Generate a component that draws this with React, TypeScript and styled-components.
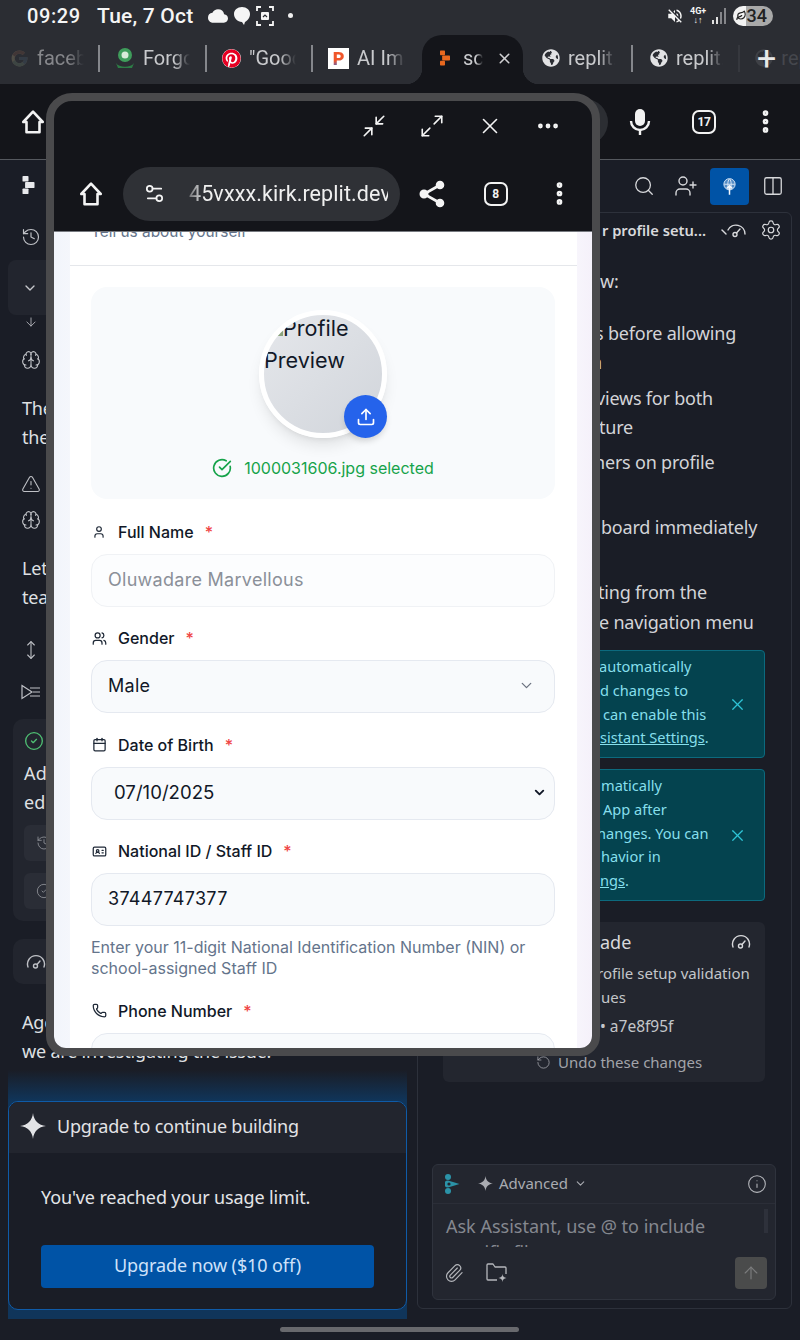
import styled, { createGlobalStyle } from "styled-components"
import {
  ArrowDown,
  ArrowUp,
  Brain,
  Calendar,
  ChevronDown,
  CircleCheck,
  CircleCheckBig,
  Columns2,
  Ellipsis,
  EllipsisVertical,
  History,
  IdCard,
  Info,
  Leaf,
  Maximize2,
  Minimize2,
  MoveVertical,
  Paperclip,
  Phone,
  RotateCcw,
  Search,
  Settings,
  Settings2,
  TriangleAlert,
  Upload,
  User,
  UserPlus,
  Users,
  X,
} from "lucide-react"
import { FaGlobeAmericas, FaPinterest } from "react-icons/fa"
import { FcGoogle } from "react-icons/fc"
import { MdCloud, MdVolumeOff } from "react-icons/md"

const UI_FONT = `"Noto Sans", "Liberation Sans", sans-serif`
const FORM_FONT = `Inter, "Liberation Sans", sans-serif`
const PHONE_FONT = `Roboto, "Liberation Sans", sans-serif`

const GlobalStyle = createGlobalStyle`
  html, body {
    margin: 0;
    padding: 0;
    background: #1a1d26;
  }
  * {
    box-sizing: border-box;
  }
`

const Screen = styled.div`
  position: relative;
  width: 800px;
  height: 1340px;
  overflow: hidden;
  background: #1a1d26;
  color: #e4e5e8;
  font-family: ${UI_FONT};
`

/* phone chrome */

const TopChrome = styled.div`
  background: #2b2d33;
  height: 84px;
`

const StatusBar = styled.div`
  height: 35px;
  display: flex;
  align-items: center;
  padding: 0 27px 4px;
  font-family: ${PHONE_FONT};
  color: #f5f5f5;
`

const Clock = styled.span`
  font-size: 20px;
  font-weight: 500;
  letter-spacing: 0.6px;
  width: 70px;
`

const DateText = styled.span`
  font-size: 21px;
  font-weight: 500;
  width: 111px;
  letter-spacing: 0.2px;
  white-space: nowrap;
`

const StatusIcons = styled.div`
  display: flex;
  align-items: center;
  gap: 5px;
`

const Dot = styled.span`
  width: 5px;
  height: 5px;
  margin-left: 9px;
  border-radius: 50%;
  background: #f0f0f0;
`

const StatusRight = styled.div`
  margin-left: auto;
  display: flex;
  align-items: center;
`

const NetworkLabel = styled.span`
  font-size: 9px;
  line-height: 9px;
  font-weight: 700;
  text-align: center;
  width: 16px;
  margin: 0 6px 0 6px;
`

const Battery = styled.span`
  margin: 0 0 0 7px;
  width: 40px;
  height: 20px;
  border-radius: 10px;
  background: linear-gradient(90deg, #f2f2f2 0 32%, #a9a9a9 32% 100%);
  color: #222;
  font-size: 18px;
  font-weight: 500;
  display: flex;
  align-items: center;
  justify-content: space-between;
  padding: 0 6px 0 3px;
`

const TabStrip = styled.div`
  height: 49px;
  display: flex;
  align-items: center;
  font-family: ${PHONE_FONT};
`

const Tab = styled.div<{ $width: number; $pad: number }>`
  width: ${({ $width }) => $width}px;
  padding: 0 0 3px ${({ $pad }) => $pad}px;
  height: 100%;
  flex: none;
  display: flex;
  align-items: center;
  gap: 8px;
`

const ActiveTab = styled.div`
  position: relative;
  width: 101px;
  height: 100%;
  flex: none;
  display: flex;
  align-items: center;
  padding: 0 0 3px 18px;
  gap: 13px;
  background: #14151a;
  border-radius: 20px 20px 0 0;

  &::before,
  &::after {
    content: "";
    position: absolute;
    bottom: 0;
    width: 16px;
    height: 16px;
  }
  &::before {
    left: -16px;
    background: radial-gradient(circle at 0 0, transparent 16px, #14151a 16.5px);
  }
  &::after {
    right: -16px;
    background: radial-gradient(circle at 100% 0, transparent 16px, #14151a 16.5px);
  }
`

const TabTitle = styled.span<{ $width: number; $dim?: boolean }>`
  width: ${({ $width }) => $width}px;
  overflow: hidden;
  white-space: nowrap;
  font-size: 20px;
  color: ${({ $dim }) => ($dim ? "#86878b" : "#c9cacd")};
  -webkit-mask-image: linear-gradient(90deg, #000 65%, transparent 100%);
  mask-image: linear-gradient(90deg, #000 65%, transparent 100%);
`

const TabSeparator = styled.span<{ $faint?: boolean }>`
  flex: none;
  width: 2px;
  height: 27px;
  margin-bottom: 3px;
  background: ${({ $faint }) => ($faint ? "#36383e" : "#85878c")};
`

const FadedIcon = styled.span`
  flex: none;
  display: flex;
  opacity: 0.22;
  filter: grayscale(0.7);
`

const PaperIcon = styled.span`
  flex: none;
  width: 21px;
  height: 21px;
  background: #fff;
  display: flex;
  align-items: center;
  justify-content: center;
`

const PaperLetter = styled.span`
  font: 900 18px ${PHONE_FONT};
  background: linear-gradient(165deg, #f0562a 55%, #3b62d4 85%);
  -webkit-background-clip: text;
  background-clip: text;
  color: transparent;
`

const PlusTab = styled.span`
  position: relative;
  margin: 0 0 3px 17px;
  width: 22px;
  text-align: center;
  font-size: 34px;
  font-weight: 400;
  line-height: 46px;
  color: #e8e8e8;
`

const PlusGhost = styled.span`
  position: absolute;
  left: -2px;
  top: 14px;
  display: flex;
  opacity: 0.1;
`

const GhostTitle = styled.span`
  margin: 0 0 3px 5px;
  font-size: 20px;
  color: #45474d;
  white-space: nowrap;
`

const AddressBar = styled.div`
  height: 76px;
  background: #14151a;
  display: flex;
  align-items: center;
  padding-left: 20px;
  border-bottom: 1px solid #55585e;
  color: #f2f2f2;
`

const AddressPill = styled.div`
  margin-left: 262px;
  width: 300px;
  height: 46px;
  border-radius: 23px;
  background: #2c2e33;
`

const AddressActions = styled.div`
  margin-left: 21px;
  display: flex;
  align-items: center;
  gap: 38px;
`

const MicSlot = styled.span`
  display: flex;
  margin-right: 3px;
`

const MenuDots = styled(EllipsisVertical)`
  margin-left: -3px;
`

const CountBadge = styled.span<{ $size: number }>`
  width: ${({ $size }) => $size}px;
  height: ${({ $size }) => $size}px;
  border: 2.5px solid #f2f2f2;
  border-radius: 7px;
  display: flex;
  align-items: center;
  justify-content: center;
  font: 700 12px ${PHONE_FONT};
  letter-spacing: -0.5px;
  color: #f2f2f2;
`

const Workspace = styled.div`
  display: flex;
`

/* left column */

const LeftPanel = styled.div`
  width: 416px;
  flex: none;
  display: flex;
  flex-direction: column;
  height: 1179px;
`

const IconRow = styled.div<{ $top: number; $height?: number; $left?: number }>`
  margin-top: ${({ $top }) => $top}px;
  height: ${({ $height }) => $height ?? 20}px;
  padding-left: ${({ $left }) => $left ?? 21}px;
  display: flex;
  align-items: center;
  color: #bfc1c6;
`

const CollapsedRow = styled.div`
  margin: 11px 16px 0 8px;
  height: 55px;
  padding-left: 14px;
  border-radius: 8px;
  background: #22252e;
  display: flex;
  align-items: center;
  color: #c6c8cc;
`

const Message = styled.div<{ $top: number }>`
  margin-top: ${({ $top }) => $top}px;
  padding-left: 22px;
  font-size: 18px;
  line-height: 29px;
  color: #dfe0e3;
  letter-spacing: -0.2px;
  white-space: nowrap;
`

const ResultCard = styled.div`
  margin: 17px 11px 0 13px;
  height: 202px;
  padding: 12px 11px;
  border-radius: 10px;
  background: #22252e;
`

const ResultText = styled.div`
  margin-top: 3px;
  font-size: 18px;
  line-height: 29px;
  color: #dfe0e3;
  letter-spacing: 0.2px;
`

const ResultRow = styled.div<{ $top: number }>`
  margin-top: ${({ $top }) => $top}px;
  height: 36px;
  padding-left: 12px;
  border-radius: 6px;
  background: #2a2d36;
  display: flex;
  align-items: center;
  color: #8f9197;
`

const GaugeCard = styled.div`
  margin: 18px 11px 0 13px;
  height: 45px;
  padding-left: 13px;
  border-radius: 10px;
  background: #22252e;
  display: flex;
  align-items: center;
  color: #bfc1c6;
`

const UpgradeGlow = styled.div`
  margin: -6px 9px 0 8px;
  padding: 41px 0 9px;
  background: linear-gradient(
    180deg,
    rgba(16, 64, 112, 0) 0,
    rgba(16, 64, 112, 0) 10px,
    #10355a 41px,
    #10355a 100%
  );
`

const UpgradeCard = styled.div`
  height: 209px;
  border: 1px solid #0f5ba8;
  border-radius: 10px;
  background: #1a1d26;
  overflow: hidden;
`

const UpgradeHeader = styled.div`
  height: 51px;
  display: flex;
  align-items: center;
  gap: 11px;
  padding: 0 0 3px 11px;
  background: #22252e;
  font-size: 18px;
  letter-spacing: -0.25px;
  color: #e2e3e6;
`

const UpgradeBody = styled.div`
  padding: 31px 32px 0;
`

const UpgradeNote = styled.div`
  font-size: 18px;
  line-height: 26px;
  letter-spacing: -0.13px;
  color: #e4e5e8;
`

const UpgradeButton = styled.div`
  margin-top: 35px;
  height: 43px;
  padding-bottom: 3px;
  border-radius: 4px;
  background: #0053a6;
  display: flex;
  align-items: center;
  justify-content: center;
  font-size: 18px;
  letter-spacing: -0.1px;
  color: #cfe2fa;
`

/* right column */

const RightPanel = styled.div`
  flex: 1;
  min-width: 0;
  padding: 0 8px 0 1px;
`

const PanelToolbar = styled.div`
  height: 52px;
  display: flex;
  align-items: center;
  justify-content: flex-end;
  padding-right: 8px;
  gap: 13px;
  color: #d8d9dc;
`

const SearchIcon = styled(Search)`
  margin-right: 6px;
`

const ActiveToolButton = styled.span`
  width: 39px;
  height: 37px;
  margin-left: -1px;
  border-radius: 4px;
  background: #0053a6;
  display: flex;
  align-items: center;
  justify-content: center;
  color: #d9e6f6;
`

const AssistantCard = styled.div`
  height: 1097px;
  border: 1px solid #2d313b;
  border-radius: 6px;
`

const ThreadTitle = styled.div`
  height: 34px;
  display: flex;
  align-items: center;
  justify-content: flex-end;
  padding-right: 9px;
  color: #d8d9dc;
`

const ThreadName = styled.span`
  margin-right: 15px;
  font-size: 14.7px;
  font-weight: 600;
  white-space: nowrap;
`

const ThreadGauge = styled.span`
  margin-right: 13px;
  display: flex;
`

const BodyLine = styled.div<{ $x: number; $top?: number }>`
  margin-top: ${({ $top }) => $top ?? 0}px;
  padding-left: ${({ $x }) => $x}px;
  height: 29px;
  font-size: 18px;
  line-height: 29px;
  letter-spacing: -0.2px;
  white-space: nowrap;
  color: #d3d4d8;
`

const TealAlert = styled.div<{ $top: number; $height: number }>`
  margin: ${({ $top }) => $top}px 26px 0 25px;
  height: ${({ $height }) => $height}px;
  padding: 0 17px 0 151px;
  border: 1px solid #0c6a7e;
  border-radius: 4px;
  background: #04434f;
  display: flex;
  align-items: center;
  justify-content: space-between;
`

const TealText = styled.div`
  margin-top: -3px;
  font-size: 14.6px;
  white-space: nowrap;
  color: #86dfec;
`

const TealLine = styled.div<{ $x: number }>`
  height: 23.8px;
  line-height: 23.8px;
  padding-left: ${({ $x }) => $x}px;
`

const TealLink = styled.span`
  text-decoration: underline;
`

const CheckpointCard = styled.div`
  margin: 21px 26px 0 25px;
  height: 160px;
  border-radius: 6px;
  background: #23262f;
  padding: 7px 14px 0 157px;
  color: #c4c6ca;
`

const CheckpointHead = styled.div`
  display: flex;
  justify-content: space-between;
  align-items: center;
  font-size: 18px;
  line-height: 26px;
  color: #d8d9dc;
`

const CheckpointText = styled.div`
  margin: 6px 0 0 -3px;
  font-size: 15px;
  line-height: 24px;
  white-space: nowrap;
`

const CommitHash = styled.div`
  margin-top: 5px;
  font-size: 15.5px;
  line-height: 24px;
`

const UndoLine = styled.div`
  margin: 12px 0 0 -64px;
  display: flex;
  align-items: center;
  gap: 7px;
  font-size: 15px;
  line-height: 24px;
  color: #a2a4aa;
  white-space: nowrap;
`

const Composer = styled.div`
  margin: 82px 15px 0 14px;
  height: 136px;
  border: 1px solid #2f333d;
  border-radius: 6px;
  background: #23262f;
  display: flex;
  flex-direction: column;
  color: #b5b7bc;
`

const ComposerHead = styled.div`
  height: 39px;
  flex: none;
  display: flex;
  align-items: center;
  padding: 0 8px 0 12px;
  border-bottom: 1px solid #2b2e38;
`

const ModeLabel = styled.span`
  margin-left: 18px;
  display: flex;
  align-items: center;
  gap: 6px;
  font-size: 15px;
  line-height: 18px;
  padding-bottom: 2px;
  color: #a9abb1;
`

const ComposerInfo = styled.span`
  margin-left: auto;
  display: flex;
`

const ComposerInput = styled.div`
  position: relative;
  height: 42px;
  flex: none;
  margin-top: 1px;
  padding: 8px 0 0 13px;
  overflow: hidden;
  font-size: 18px;
  line-height: 26px;
  color: #85888f;
`

const InputScrollbar = styled.span`
  position: absolute;
  top: 4px;
  right: 7px;
  width: 4px;
  height: 24px;
  background: #2e313b;
`

const ComposerFoot = styled.div`
  flex: 1;
  display: flex;
  align-items: center;
  gap: 22px;
  padding: 0 8px 0 11px;
  color: #b5b7bc;
`

const SendButton = styled.span`
  margin-left: auto;
  width: 32px;
  height: 32px;
  border-radius: 4px;
  background: #4a4b4b;
  display: flex;
  align-items: center;
  justify-content: center;
  color: #7b7c7d;
`

const HomeIndicator = styled.div`
  position: absolute;
  left: 280px;
  bottom: 8px;
  width: 239px;
  height: 5px;
  border-radius: 3px;
  background: #68696d;
`

/* floating preview window */

const PopupWindow = styled.div`
  position: absolute;
  left: 46px;
  top: 93px;
  width: 554px;
  height: 963px;
  border: 8px solid #4a4a4c;
  border-radius: 26px 26px 20px 20px;
  background: #14151a;
  overflow: hidden;
  display: flex;
  flex-direction: column;
  color: #f4f4f4;
`

const WindowControls = styled.div`
  height: 50px;
  flex: none;
  padding-right: 31px;
  display: flex;
  align-items: center;
  justify-content: flex-end;
  gap: 32px;
  font-family: ${PHONE_FONT};
`

const BrowserBar = styled.div`
  height: 81px;
  flex: none;
  display: flex;
  align-items: center;
  padding: 5px 0 0 24px;
  border-bottom: 1px solid #777a80;
`

const UrlPill = styled.div`
  margin-left: 19px;
  width: 277px;
  height: 54px;
  border-radius: 27px;
  background: #2f3136;
  display: flex;
  align-items: center;
  padding-left: 20px;
  gap: 23px;
  flex: none;
`

const UrlText = styled.span`
  width: 199px;
  overflow: hidden;
  white-space: nowrap;
  font: 400 21.5px ${PHONE_FONT};
  letter-spacing: 0.1px;
  color: #f0f0f0;
  -webkit-mask-image: linear-gradient(90deg, #0005 0, #000 16px);
  mask-image: linear-gradient(90deg, #0005 0, #000 16px);
`

const BrowserActions = styled.div`
  margin-left: 17px;
  display: flex;
  align-items: center;
`

const BrowserAction = styled.span<{ $width: number }>`
  width: ${({ $width }) => $width}px;
  display: flex;
  justify-content: center;
`

const Page = styled.div`
  flex: 1;
  min-height: 0;
  overflow: hidden;
  padding: 0 15px 0 16px;
  background: linear-gradient(90deg, #f2f5fb, #f7f8fc 5%, #f9f8fd 95%, #f5f1fa);
  font-family: ${FORM_FONT};
`

const FormCard = styled.div`
  background: #fff;
`

const CardHeader = styled.div`
  height: 34px;
  overflow: hidden;
  border-bottom: 1px solid #e5e7eb;
  padding-left: 21px;
`

const CardSubtitle = styled.div`
  margin-top: -10px;
  font-size: 15.4px;
  line-height: 20px;
  color: #64748b;
`

const CardBody = styled.div`
  padding: 21px 22px 0 21px;
`

const UploadBox = styled.div`
  height: 212px;
  border-radius: 16px;
  background: #f8fafc;
  display: flex;
  flex-direction: column;
  align-items: center;
  padding-top: 23px;
`

const AvatarWrap = styled.div`
  position: relative;
  width: 128px;
  height: 128px;
`

const Avatar = styled.div`
  width: 128px;
  height: 128px;
  border: 5px solid #fff;
  border-radius: 50%;
  overflow: hidden;
  background: linear-gradient(135deg, #e5e7eb, #d1d5db);
  box-shadow: 0 10px 15px -3px rgba(0, 0, 0, 0.1), 0 4px 6px -4px rgba(0, 0, 0, 0.1);
`

const AvatarAlt = styled.div`
  margin-top: -3px;
  font-size: 21.6px;
  line-height: 32px;
  color: #111827;
`

const BrokenImage = styled.span`
  display: inline-block;
  width: 8px;
  height: 8px;
  margin-left: 11px;
  background: linear-gradient(135deg, #eef2ee 40%, #8aa37c 60%);
`

const UploadButton = styled.span`
  position: absolute;
  right: 0;
  bottom: 0;
  width: 43px;
  height: 43px;
  border-radius: 50%;
  background: #2563eb;
  box-shadow: 0 4px 6px -1px rgba(0, 0, 0, 0.15);
  display: flex;
  align-items: center;
  justify-content: center;
  color: #fff;
`

const FileStatus = styled.div`
  margin-top: 18px;
  display: flex;
  align-items: center;
  gap: 12px;
  font-size: 16px;
  line-height: 24px;
  color: #16a34a;
`

const FieldGroup = styled.div<{ $first?: boolean }>`
  margin-top: ${({ $first }) => ($first ? 21 : 20)}px;
`

const FieldLabel = styled.div`
  height: 23.5px;
  margin-bottom: 10px;
  display: flex;
  align-items: center;
  font-size: 16px;
  font-weight: 500;
  color: #111827;
`

const LabelIcon = styled.span`
  width: 27px;
  display: flex;
  padding-left: 1px;
  color: #1f2937;
`

const Required = styled.span`
  margin-left: 11px;
  font-size: 16px;
  color: #ef4444;
`

const FieldBox = styled.div<{ $muted?: boolean; $pad?: number }>`
  height: 53px;
  border: 1px solid ${({ $muted }) => ($muted ? "#f0f2f5" : "#e5e9f0")};
  border-radius: 16px;
  background: ${({ $muted }) => ($muted ? "#fcfdfe" : "#f8fafc")};
  padding: 0 8px 2px ${({ $pad }) => $pad ?? 16}px;
  display: flex;
  align-items: center;
  justify-content: space-between;
  font-size: 18px;
  color: ${({ $muted }) => ($muted ? "#8b9099" : "#111827")};
  letter-spacing: 0.28px;
`

const FieldArrow = styled.span<{ $color: string; $right: number }>`
  display: flex;
  margin-right: ${({ $right }) => $right}px;
  color: ${({ $color }) => $color};
`

const DateValue = styled.span`
  font-size: 18.6px;
  letter-spacing: 0;
`

const HelpText = styled.div`
  margin-top: 11px;
  font-size: 16px;
  line-height: 21px;
  white-space: nowrap;
  color: #64748b;
`

/* drawn icons */

const HomeGlyph = ({ size = 26 }: { size?: number }) => (
  <svg width={size} height={size} viewBox="0 0 24 24" fill="none" stroke="currentColor" strokeWidth="2.4" strokeLinejoin="round">
    <path d="M12 2.5 3 12h3v9.5h12V12h3z" />
  </svg>
)

const ReplitMark = ({ color, width, height }: { color: string; width: number; height: number }) => (
  <svg width={width} height={height} viewBox="0 0 14 21" fill={color}>
    <rect x="0" y="0" width="7" height="6.5" rx="1" />
    <rect x="3" y="7" width="11" height="7" rx="1" />
    <rect x="0" y="14.5" width="7" height="6.5" rx="1" />
  </svg>
)

const AssistantMark = () => (
  <svg width="15" height="20" viewBox="0 0 15 20" fill="#2b93a8">
    <circle cx="3" cy="3" r="3" />
    <circle cx="3" cy="17" r="3" />
    <path d="M3 6.5 14.5 10 3 13.5a3.5 3.5 0 0 1 0-7z" />
    <circle cx="4" cy="10" r="1.6" fill="#23262f" />
  </svg>
)

const Sparkle = ({ size }: { size: number }) => (
  <svg width={size} height={size} viewBox="0 0 24 24" fill="currentColor">
    <path d="M12 0C12.7 7 17 11.3 24 12 17 12.7 12.7 17 12 24 11.3 17 7 12.7 0 12 7 11.3 11.3 7 12 0Z" />
  </svg>
)

const GaugeGlyph = ({ withTick }: { withTick?: boolean }) => (
  <svg width={withTick ? 26 : 20} height="18" viewBox={withTick ? "0 0 26 18" : "0 0 20 18"} fill="none" stroke="currentColor" strokeWidth="1.4" strokeLinecap="round">
    {withTick ? (
      <>
        <path d="M1 9l4 4" />
        <path d="M7 9a9 9 0 0 1 17 4" />
        <circle cx="14" cy="13.5" r="2" />
        <path d="M15.5 12 19 8" />
      </>
    ) : (
      <>
        <path d="M2 14a8.5 8.5 0 1 1 16 0" />
        <circle cx="9.5" cy="13" r="2" />
        <path d="M11 11.5 14 8" />
      </>
    )}
  </svg>
)

const SequenceGlyph = () => (
  <svg width="20" height="16" viewBox="0 0 20 16" fill="none" stroke="currentColor" strokeWidth="1.2">
    <path d="M1 1.5 11 8 1 14.500z" />
    <path d="M9 4h10M12 8h7M9 12h10" />
  </svg>
)

const PublishGlyph = () => (
  <svg width="15" height="17" viewBox="0 0 20 22" fill="none" stroke="currentColor" strokeWidth="1.3">
    <circle cx="10" cy="8" r="7.500" fill="#cfe0f5" fillOpacity="0.4" />
    <path d="M3 8h14M10 1c-3 2-3 12 0 14M10 1c3 2 3 12 0 14" />
    <path d="M10 22v-12M6.500 13.500l3.500-3.500 3.500 3.500" stroke="#f4f8fd" strokeWidth="2" />
  </svg>
)

const FolderSpark = () => (
  <svg width="22" height="20" viewBox="0 0 22 20" fill="none" stroke="currentColor" strokeWidth="1.3" strokeLinejoin="round">
    <path d="M11 17H2a1 1 0 0 1-1-1V2a1 1 0 0 1 1-1h5l2 3h10a1 1 0 0 1 1 1v6" />
    <path d="M16.500 11c.3 2.600 1.400 3.700 4 4-2.600.3-3.700 1.400-4 4-.3-2.600-1.400-3.700-4-4 2.600-.3 3.700-1.400 4-4z" fill="currentColor" stroke="none" />
  </svg>
)

const ShareGlyph = () => (
  <svg width="26" height="28" viewBox="0 0 26 28" fill="currentColor" stroke="currentColor" strokeWidth="2.6">
    <path d="M21 5 5 14l16 9" fill="none" />
    <circle cx="21" cy="5" r="3" />
    <circle cx="5" cy="14" r="3.2" />
    <circle cx="21" cy="23" r="3" />
  </svg>
)

const MicGlyph = () => (
  <svg width="22" height="28" viewBox="0 0 22 28" fill="currentColor">
    <rect x="6" y="1" width="10" height="17" rx="5" />
    <path d="M2 13a9 9 0 0 0 18 0" fill="none" stroke="currentColor" strokeWidth="2.4" />
    <rect x="9.800" y="21" width="2.400" height="6" />
  </svg>
)

const ChatBubble = () => (
  <svg width="18" height="20" viewBox="0 0 18 20" fill="#f5f5f5">
    <path d="M9 1c4.600 0 8 2.900 8 7s-2.700 6.600-5 8l-1 3-2-3C4.400 16 1 12.100 1 8s3.400-7 8-7z" />
  </svg>
)

const CaptureGlyph = () => (
  <svg width="18" height="20" viewBox="0 0 18 20" fill="none" stroke="#f5f5f5" strokeWidth="1.8">
    <path d="M1 5V1h4M13 1h4v4M17 15v4h-4M5 19H1v-4" />
    <rect x="5" y="6" width="8" height="8" rx="1" fill="#f5f5f5" stroke="none" />
    <path d="M7 11l2-2 2 2" stroke="#2b2d33" strokeWidth="1.2" />
  </svg>
)

const SignalGlyph = () => (
  <svg width="14" height="18" viewBox="0 0 14 18" fill="#e0e0e0">
    <rect x="0" y="13" width="2" height="4" />
    <rect x="4" y="10" width="2" height="7" />
    <rect x="8" y="5" width="2" height="12" fill="#85868a" />
    <rect x="12" y="1" width="2" height="16" fill="#85868a" />
  </svg>
)

const SealIcon = () => (
  <svg width="20" height="24" viewBox="0 0 20 24">
    <circle cx="10" cy="9" r="7" fill="#3f9d5b" />
    <circle cx="10" cy="9" r="3.500" fill="#d9ecd9" />
    <path d="M1 17c3 5 15 5 18 0l-2 5H3z" fill="#2d7d46" />
  </svg>
)

export default function App() {
  return (
    <Screen>
      <GlobalStyle />
      <TopChrome>
        <StatusBar>
          <Clock>09:29</Clock>
          <DateText>Tue, 7 Oct</DateText>
          <StatusIcons>
            <MdCloud size={20} />
            <ChatBubble />
            <CaptureGlyph />
            <Dot />
          </StatusIcons>
          <StatusRight>
            <MdVolumeOff size={18} />
            <NetworkLabel>
              4G+
              <br />
              ↓↑
            </NetworkLabel>
            <SignalGlyph />
            <Battery>
              <Leaf size={11} strokeWidth={2.6} />
              34
            </Battery>
          </StatusRight>
        </StatusBar>
        <TabStrip>
          <Tab $width={98} $pad={10}>
            <FadedIcon>
              <FcGoogle size={19} />
            </FadedIcon>
            <TabTitle $width={47} $dim>
              facebook
            </TabTitle>
          </Tab>
          <TabSeparator />
          <Tab $width={105} $pad={15}>
            <SealIcon />
            <TabTitle $width={47}>Forgot</TabTitle>
          </Tab>
          <TabSeparator />
          <Tab $width={104} $pad={15}>
            <FaPinterest size={19} color="#e60023" style={{ background: "#fff", borderRadius: "50%" }} />
            <TabTitle $width={47}>"Good</TabTitle>
          </Tab>
          <TabSeparator />
          <Tab $width={109} $pad={15}>
            <PaperIcon>
              <PaperLetter>P</PaperLetter>
            </PaperIcon>
            <TabTitle $width={48}>AI Image</TabTitle>
          </Tab>
          <ActiveTab>
            <ReplitMark color="#e8681f" width={10} height={16} />
            <TabTitle $width={20}>scl</TabTitle>
            <X size={17} color="#d0d0d2" strokeWidth={2.2} />
          </ActiveTab>
          <Tab $width={108} $pad={19}>
            <FaGlobeAmericas size={18} color="#e2e2e4" />
            <TabTitle $width={47}>replit.</TabTitle>
          </Tab>
          <TabSeparator />
          <Tab $width={105} $pad={17}>
            <FaGlobeAmericas size={18} color="#e2e2e4" />
            <TabTitle $width={47}>replit.</TabTitle>
          </Tab>
          <TabSeparator $faint />
          <PlusTab>
            <PlusGhost>
              <FaGlobeAmericas size={18} />
            </PlusGhost>
            +
          </PlusTab>
          <GhostTitle>rep</GhostTitle>
        </TabStrip>
      </TopChrome>
      <AddressBar>
        <HomeGlyph />
        <AddressPill />
        <AddressActions>
          <MicSlot>
            <MicGlyph />
          </MicSlot>
          <CountBadge $size={24}>17</CountBadge>
          <MenuDots size={29} strokeWidth={2.7} />
        </AddressActions>
      </AddressBar>
      <Workspace>
        <LeftPanel>
          <IconRow $top={15} $left={22}>
            <ReplitMark color="#e8e9ec" width={13} height={18} />
          </IconRow>
          <IconRow $top={30} $height={24}>
            <History size={20} strokeWidth={1.4} />
          </IconRow>
          <CollapsedRow>
            <ChevronDown size={16} />
          </CollapsedRow>
          <IconRow $top={0} $height={14} $left={24}>
            <ArrowDown size={14} strokeWidth={1.4} />
          </IconRow>
          <IconRow $top={21} $left={21}>
            <Brain size={20} strokeWidth={1.3} />
          </IconRow>
          <Message $top={24}>
            The
            <br />
            the
          </Message>
          <IconRow $top={22} $left={21}>
            <TriangleAlert size={20} strokeWidth={1.3} />
          </IconRow>
          <IconRow $top={16} $left={21}>
            <Brain size={20} strokeWidth={1.3} />
          </IconRow>
          <Message $top={24}>
            Let
            <br />
            tea
          </Message>
          <IconRow $top={28} $left={21}>
            <MoveVertical size={20} strokeWidth={1.3} />
          </IconRow>
          <IconRow $top={22} $left={21}>
            <SequenceGlyph />
          </IconRow>
          <ResultCard>
            <CircleCheck size={20} color="#4fbf73" strokeWidth={1.6} />
            <ResultText>
              Ad
              <br />
              ed
            </ResultText>
            <ResultRow $top={8}>
              <History size={16} strokeWidth={1.3} />
            </ResultRow>
            <ResultRow $top={12}>
              <CircleCheck size={16} strokeWidth={1.3} />
            </ResultRow>
          </ResultCard>
          <GaugeCard>
            <GaugeGlyph />
          </GaugeCard>
          <Message $top={24}>
            Agent
            <br />
            we are investigating the issue.
          </Message>
          <UpgradeGlow>
            <UpgradeCard>
              <UpgradeHeader>
                <Sparkle size={26} />
                Upgrade to continue building
              </UpgradeHeader>
              <UpgradeBody>
                <UpgradeNote>You've reached your usage limit.</UpgradeNote>
                <UpgradeButton>Upgrade now ($10 off)</UpgradeButton>
              </UpgradeBody>
            </UpgradeCard>
          </UpgradeGlow>
        </LeftPanel>
        <RightPanel>
          <PanelToolbar>
            <SearchIcon size={22} strokeWidth={1.4} />
            <UserPlus size={24} strokeWidth={1.4} />
            <ActiveToolButton>
              <PublishGlyph />
            </ActiveToolButton>
            <Columns2 size={22} strokeWidth={1.4} />
          </PanelToolbar>
          <AssistantCard>
            <ThreadTitle>
              <ThreadName>r profile setu...</ThreadName>
              <ThreadGauge>
                <GaugeGlyph withTick />
              </ThreadGauge>
              <Settings size={22} strokeWidth={1.3} />
            </ThreadTitle>
            <BodyLine $x={182} $top={20}>
              w:
            </BodyLine>
            <BodyLine $x={177} $top={23}>
              s before allowing
            </BodyLine>
            <BodyLine $x={173}>n</BodyLine>
            <BodyLine $x={178} $top={7}>
              views for both
            </BodyLine>
            <BodyLine $x={181}>ture</BodyLine>
            <BodyLine $x={176} $top={6}>
              ners on profile
            </BodyLine>
            <BodyLine $x={183} $top={36}>
              board immediately
            </BodyLine>
            <BodyLine $x={180} $top={36}>
              ting from the
            </BodyLine>
            <BodyLine $x={181} $top={1}>
              e navigation menu
            </BodyLine>
            <TealAlert $top={13} $height={108}>
              <TealText>
                <TealLine $x={4}>automatically</TealLine>
                <TealLine $x={5}>d changes to</TealLine>
                <TealLine $x={8}>can enable this</TealLine>
                <TealLine $x={5}>
                  <TealLink>sistant Settings</TealLink>.
                </TealLine>
              </TealText>
              <X size={19} strokeWidth={1.5} color="#2ec4d6" />
            </TealAlert>
            <TealAlert $top={11} $height={132}>
              <TealText>
                <TealLine $x={6}>matically</TealLine>
                <TealLine $x={8}>App after</TealLine>
                <TealLine $x={2}>hanges. You can</TealLine>
                <TealLine $x={6}>havior in</TealLine>
                <TealLine $x={5}>
                  <TealLink>ngs</TealLink>.
                </TealLine>
              </TealText>
              <X size={19} strokeWidth={1.5} color="#2ec4d6" />
            </TealAlert>
            <CheckpointCard>
              <CheckpointHead>
                ade
                <GaugeGlyph />
              </CheckpointHead>
              <CheckpointText>
                rofile setup validation
                <br />
                &nbsp;ues
              </CheckpointText>
              <CommitHash>• a7e8f95f</CommitHash>
              <UndoLine>
                <RotateCcw size={15} strokeWidth={1.3} />
                Undo these changes
              </UndoLine>
            </CheckpointCard>
            <Composer>
              <ComposerHead>
                <AssistantMark />
                <ModeLabel>
                  <Sparkle size={15} />
                  Advanced
                  <ChevronDown size={13} />
                </ModeLabel>
                <ComposerInfo>
                  <Info size={20} strokeWidth={1.3} />
                </ComposerInfo>
              </ComposerHead>
              <ComposerInput>
                Ask Assistant, use @ to include
                <br />
                specific files
                <InputScrollbar />
              </ComposerInput>
              <ComposerFoot>
                <Paperclip size={20} strokeWidth={1.4} />
                <FolderSpark />
                <SendButton>
                  <ArrowUp size={20} strokeWidth={1.4} />
                </SendButton>
              </ComposerFoot>
            </Composer>
          </AssistantCard>
        </RightPanel>
      </Workspace>
      <HomeIndicator />
      <PopupWindow>
        <WindowControls>
          <Minimize2 size={26} strokeWidth={1.5} />
          <Maximize2 size={26} strokeWidth={1.5} />
          <X size={26} strokeWidth={1.5} />
          <Ellipsis size={26} strokeWidth={2.4} />
        </WindowControls>
        <BrowserBar>
          <HomeGlyph />
          <UrlPill>
            <Settings2 size={23} strokeWidth={1.8} />
            <UrlText>45vxxx.kirk.replit.dev</UrlText>
          </UrlPill>
          <BrowserActions>
            <BrowserAction $width={29}>
              <ShareGlyph />
            </BrowserAction>
            <BrowserAction $width={99}>
              <CountBadge $size={24}>8</CountBadge>
            </BrowserAction>
            <BrowserAction $width={29}>
              <EllipsisVertical size={29} strokeWidth={2.7} />
            </BrowserAction>
          </BrowserActions>
        </BrowserBar>
        <Page>
          <FormCard>
            <CardHeader>
              <CardSubtitle>Tell us about yourself</CardSubtitle>
            </CardHeader>
            <CardBody>
              <UploadBox>
                <AvatarWrap>
                  <Avatar>
                    <AvatarAlt>
                      <BrokenImage />
                      Profile Preview
                    </AvatarAlt>
                  </Avatar>
                  <UploadButton>
                    <Upload size={20} strokeWidth={2} />
                  </UploadButton>
                </AvatarWrap>
                <FileStatus>
                  <CircleCheckBig size={20} strokeWidth={2} />
                  1000031606.jpg selected
                </FileStatus>
              </UploadBox>
              <FieldGroup $first>
                <FieldLabel>
                  <LabelIcon>
                    <User size={14} />
                  </LabelIcon>
                  Full Name
                  <Required>*</Required>
                </FieldLabel>
                <FieldBox $muted>Oluwadare Marvellous</FieldBox>
              </FieldGroup>
              <FieldGroup>
                <FieldLabel>
                  <LabelIcon>
                    <Users size={15} />
                  </LabelIcon>
                  Gender
                  <Required>*</Required>
                </FieldLabel>
                <FieldBox>
                  Male
                  <FieldArrow $color="#6b7280" $right={11}>
                    <ChevronDown size={17} strokeWidth={1.8} />
                  </FieldArrow>
                </FieldBox>
              </FieldGroup>
              <FieldGroup>
                <FieldLabel>
                  <LabelIcon>
                    <Calendar size={15} />
                  </LabelIcon>
                  Date of Birth
                  <Required>*</Required>
                </FieldLabel>
                <FieldBox $pad={22}>
                  <DateValue>07/10/2025</DateValue>
                  <FieldArrow $color="#111827" $right={-1}>
                    <ChevronDown size={15} strokeWidth={3} />
                  </FieldArrow>
                </FieldBox>
              </FieldGroup>
              <FieldGroup>
                <FieldLabel>
                  <LabelIcon>
                    <IdCard size={15} />
                  </LabelIcon>
                  National ID / Staff ID
                  <Required>*</Required>
                </FieldLabel>
                <FieldBox>37447747377</FieldBox>
                <HelpText>
                  Enter your 11-digit National Identification Number (NIN) or
                  <br />
                  school-assigned Staff ID
                </HelpText>
              </FieldGroup>
              <FieldGroup>
                <FieldLabel>
                  <LabelIcon>
                    <Phone size={15} />
                  </LabelIcon>
                  Phone Number
                  <Required>*</Required>
                </FieldLabel>
                <FieldBox />
              </FieldGroup>
            </CardBody>
          </FormCard>
        </Page>
      </PopupWindow>
    </Screen>
  )
}
